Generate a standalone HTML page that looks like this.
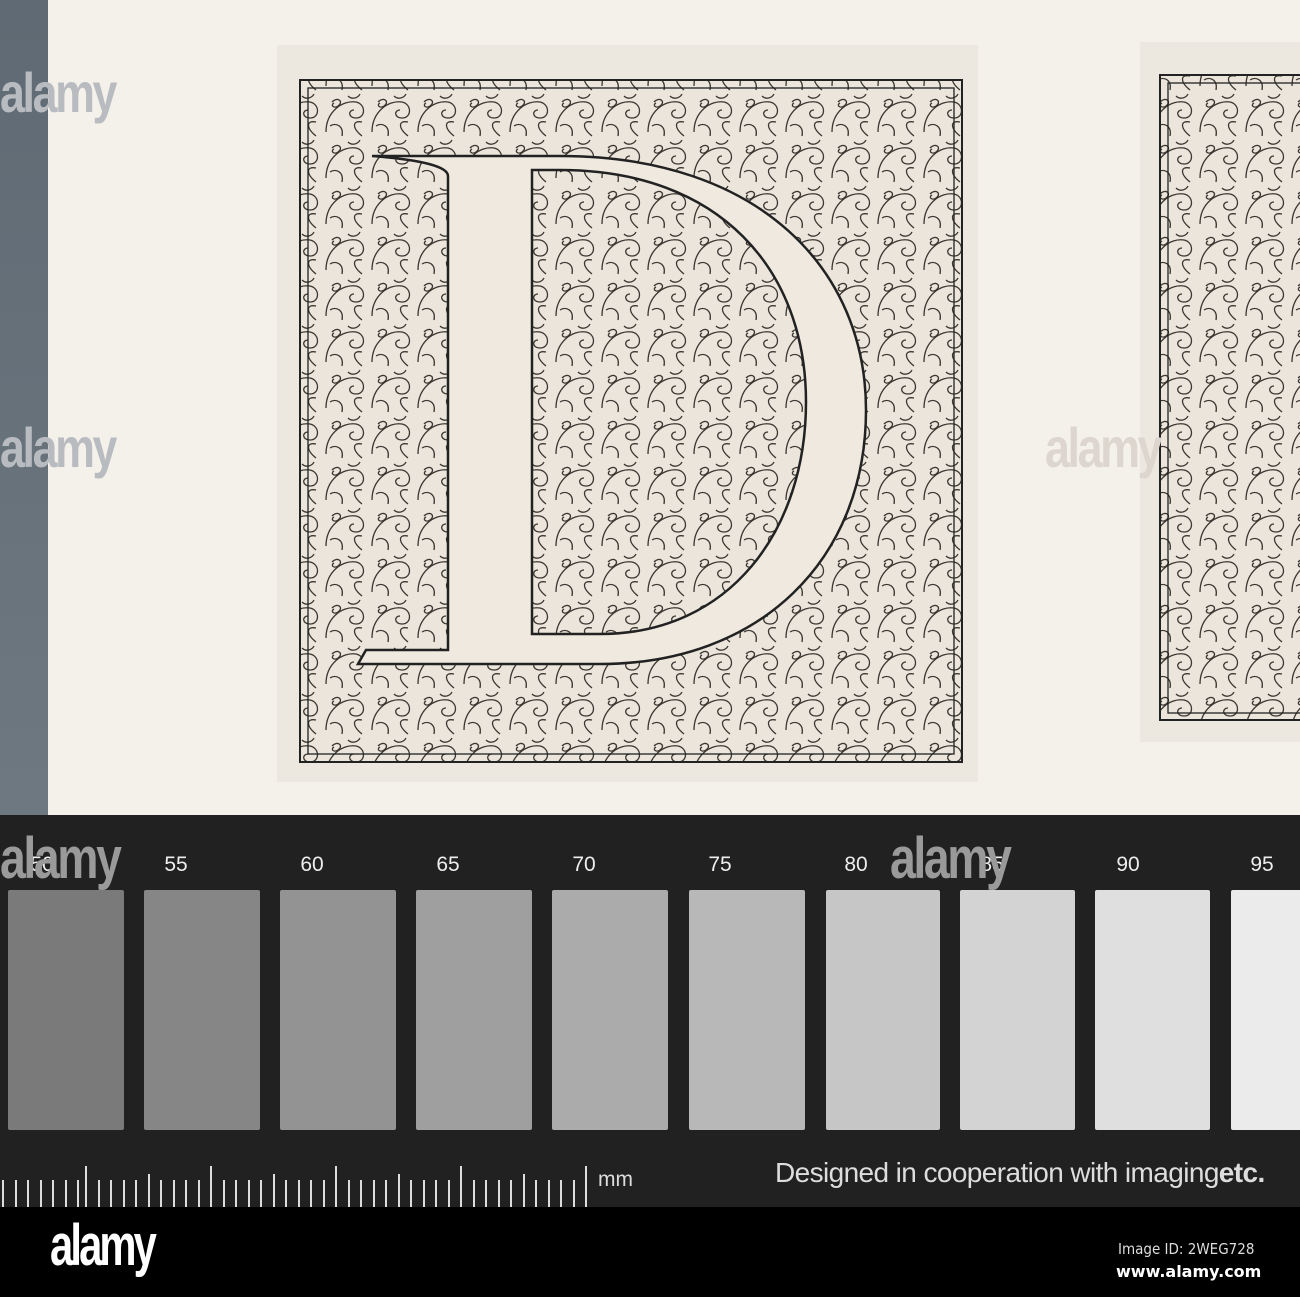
<!DOCTYPE html>
<html><head><meta charset="utf-8"><style>
*{margin:0;padding:0;box-sizing:border-box}
body{width:1300px;height:1297px;position:relative;overflow:hidden;background:#f4f0ea;font-family:"Liberation Sans",sans-serif}
.abs{position:absolute}
.num{position:absolute;top:853px;color:#eee;font-size:21px;width:60px;text-align:center;margin-left:-30px}
.sw{position:absolute;top:890px;height:240px;border-radius:2px}
.wm{position:absolute;color:#9a9a9a;font-weight:bold;font-family:"Liberation Sans Narrow","Liberation Sans",sans-serif;letter-spacing:-3px;transform:scaleX(0.8);transform-origin:left}
</style></head><body>
<div class="abs" style="left:0;top:0;width:48px;height:815px;background:linear-gradient(#5f6a74,#6e7880)"></div>

<svg class="abs" style="left:0;top:0" width="1300" height="815">
<defs>
<pattern id="orn" width="46" height="46" patternUnits="userSpaceOnUse">
<rect width="46" height="46" fill="#ebe5db"/>
<g fill="none" stroke="#3a3631" stroke-width="1.3">
<path d="M4 40 C4 20 20 8 34 10 C44 12 44 26 34 26 C26 26 26 18 32 18"/>
<path d="M40 44 C30 36 30 28 40 30"/>
<path d="M10 10 c6 -6 12 0 6 4 c-4 3 -8 -1 -4 -3"/>
<path d="M20 44 C22 34 14 30 8 34"/>
<path d="M26 4 c4 4 10 2 12 -2"/>
</g>
</pattern>
</defs>
<rect x="277" y="45" width="701" height="737" fill="#ede8df"/>
<rect x="300" y="80" width="662" height="682" fill="url(#orn)"/>
<rect x="300" y="80" width="662" height="682" fill="none" stroke="#222" stroke-width="2"/>
<rect x="308" y="88" width="646" height="666" fill="none" stroke="#222" stroke-width="1.3"/>
<path d="M372 156 L560 156 C760 156 866 270 866 410 C866 560 760 664 600 664 L358 664 L366 650 L448 650 L448 176 Q448 162 372 156 Z" fill="#efe9df" stroke="#222" stroke-width="2.5"/>
<path d="M532 170 L560 170 C720 170 806 270 806 402 C806 530 730 634 600 634 L532 634 Z" fill="url(#orn)" stroke="#222" stroke-width="2.5"/>
<rect x="1140" y="42" width="170" height="700" fill="#ede8df"/>
<rect x="1160" y="75" width="150" height="645" fill="url(#orn)"/>
<rect x="1160" y="75" width="150" height="645" fill="none" stroke="#222" stroke-width="2"/>
<rect x="1168" y="83" width="140" height="630" fill="none" stroke="#222" stroke-width="1.3"/>
</svg>

<div class="wm" style="left:0;top:60px;font-size:56px;color:#b8bcc0">alamy</div>
<div class="wm" style="left:1045px;top:415px;font-size:56px;color:#dcd6ce">alamy</div>
<div class="wm" style="left:0;top:415px;font-size:56px;color:#b8bcc0">alamy</div>

<div class="abs" style="left:0;top:815px;width:1300px;height:392px;background:#212121"></div>
<div class="sw" style="left:8px;width:116px;background:#7a7a7a"></div>
<div class="sw" style="left:144px;width:116px;background:#868686"></div>
<div class="sw" style="left:280px;width:116px;background:#939393"></div>
<div class="sw" style="left:416px;width:116px;background:#9f9f9f"></div>
<div class="sw" style="left:552px;width:116px;background:#ababab"></div>
<div class="sw" style="left:689px;width:116px;background:#b8b8b9"></div>
<div class="sw" style="left:826px;width:114px;background:#c6c6c7"></div>
<div class="sw" style="left:960px;width:115px;background:#d3d3d4"></div>
<div class="sw" style="left:1095px;width:115px;background:#dfdfe0"></div>
<div class="sw" style="left:1231px;width:80px;background:#ebebeb"></div>

<div class="num" style="left:42px">50</div>
<div class="num" style="left:176px">55</div>
<div class="num" style="left:312px">60</div>
<div class="num" style="left:448px">65</div>
<div class="num" style="left:584px">70</div>
<div class="num" style="left:720px">75</div>
<div class="num" style="left:856px">80</div>
<div class="num" style="left:992px">85</div>
<div class="num" style="left:1128px">90</div>
<div class="num" style="left:1262px">95</div>
<div class="wm" style="left:0;top:825px;font-size:58px">alamy</div>
<div class="wm" style="left:890px;top:825px;font-size:58px">alamy</div>

<svg class="abs" style="left:0;top:1160px" width="600" height="47">
<path stroke="#ddd" stroke-width="2" d="M3 20V47M16 20V47M28 20V47M41 20V47M53 20V47M66 20V47M78 20V47M86 6V47M99 20V47M111 20V47M124 20V47M136 20V47M149 14V47M161 20V47M174 20V47M186 20V47M199 20V47M211 6V47M224 20V47M236 20V47M249 20V47M261 20V47M274 14V47M286 20V47M299 20V47M311 20V47M324 20V47M336 6V47M349 20V47M361 20V47M374 20V47M386 20V47M399 14V47M411 20V47M424 20V47M436 20V47M449 20V47M461 6V47M474 20V47M486 20V47M499 20V47M511 20V47M524 14V47M536 20V47M549 20V47M561 20V47M574 20V47M586 6V47"/>
</svg>
<div class="abs" style="left:598px;top:1168px;color:#ddd;font-size:21px">mm</div>
<div class="abs" style="left:775px;top:1157px;color:#ddd;font-size:28px;letter-spacing:-0.6px;white-space:nowrap">Designed in cooperation with imaging<b>etc.</b></div>

<div class="abs" style="left:0;top:1207px;width:1300px;height:90px;background:#000"></div>
<div class="abs" style="left:50px;top:1212px;color:#fff;font-size:58px;font-weight:bold;letter-spacing:-4px;transform:scaleX(0.72);transform-origin:left">alamy</div>
<div class="abs" style="left:1118px;top:1240px;color:#ddd;font-size:15px;font-family:'DejaVu Sans Condensed','DejaVu Sans',sans-serif">Image ID: 2WEG728</div>
<div class="abs" style="left:1116px;top:1262px;color:#fff;font-size:16px;font-weight:bold;font-family:'DejaVu Sans',sans-serif">www.alamy.com</div>
</body></html>
